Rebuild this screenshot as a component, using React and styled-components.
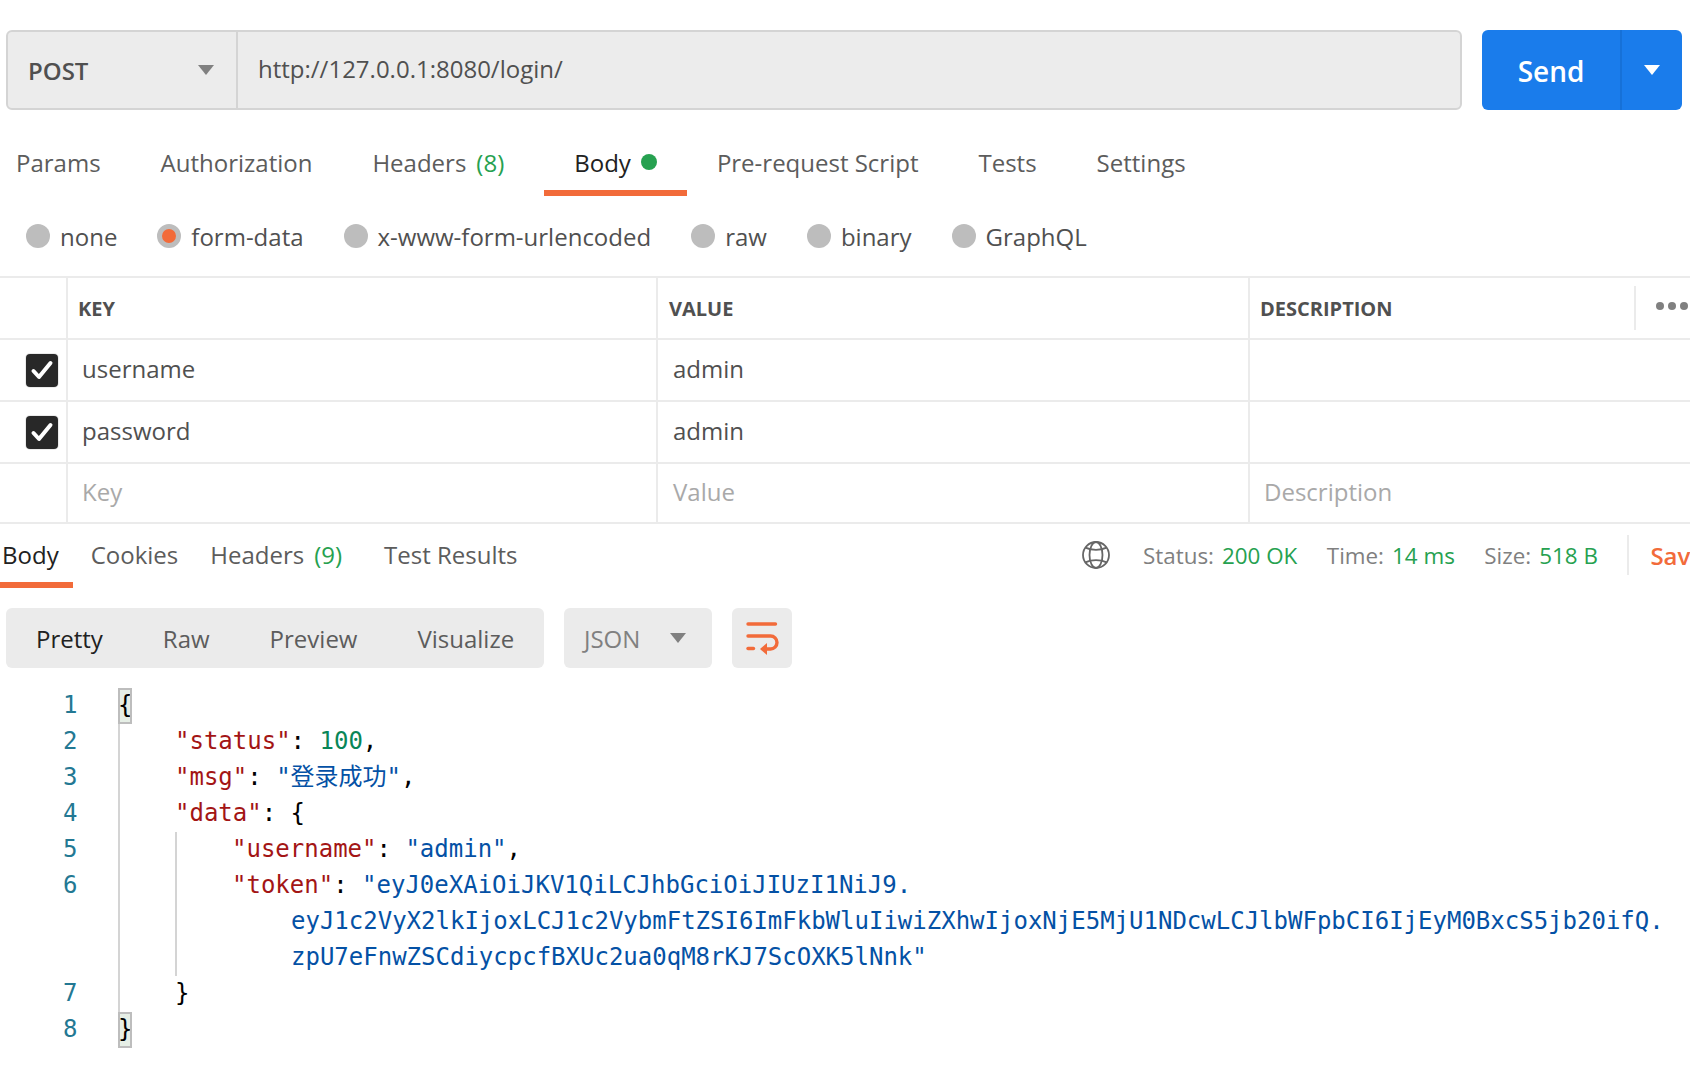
import styled, { createGlobalStyle } from 'styled-components'

const GlobalStyle = createGlobalStyle`
	html, body {
		margin: 0;
		padding: 0;
		background: #fff;
		overflow: hidden;
	}
	body {
		font-family: 'Open Sans', 'Noto Sans', sans-serif;
		color: #505050;
	}
`

const tokenLines = [
	'eyJ1c2VyX2lkIjoxLCJ1c2VybmFtZSI6ImFkbWluIiwiZXhwIjoxNjE5MjU1NDcwLCJlbWFpbCI6IjEyM0BxcS5jb20ifQ.',
	'zpU7eFnwZSCdiycpcfBXUc2ua0qM8rKJ7ScOXK5lNnk"',
]

const requestTabs = [
	{ label: 'Params' },
	{ label: 'Authorization' },
	{ label: 'Headers', count: '(8)' },
	{ label: 'Body', active: true, dot: true },
	{ label: 'Pre-request Script' },
	{ label: 'Tests' },
	{ label: 'Settings' },
]

const bodyTypes = ['none', 'form-data', 'x-www-form-urlencoded', 'raw', 'binary', 'GraphQL']

function Caret({ color = '#808080' }) {
	return (
		<svg width="16" height="12" viewBox="0 0 16 12">
			<path d="M0 1h16L8 11z" fill={color} />
		</svg>
	)
}

function Check() {
	return (
		<svg width="24" height="22" viewBox="0 0 24 22" fill="none">
			<path d="M3.500 12l5.500 6L20.500 4" stroke="#fff" strokeWidth="4" strokeLinecap="round" strokeLinejoin="round" />
		</svg>
	)
}

function Globe() {
	return (
		<svg width="28" height="28" viewBox="0 0 28 28" fill="none" stroke="#666" strokeWidth="1.8">
			<circle cx="14" cy="14" r="13" />
			<ellipse cx="14" cy="14" rx="6.500" ry="13" />
			<path d="M3.400 6.600c6 3 15.200 3 21.200 0M3.400 21.400c6-3 15.200-3 21.200 0" />
		</svg>
	)
}

function WrapIcon() {
	return (
		<svg width="34" height="36" viewBox="0 0 34 36" fill="none" stroke="#f26b3a" strokeWidth="3.4" strokeLinecap="round">
			<path d="M3 4H30.500" />
			<path d="M3 16H25.500a6.500 6.500 0 0 1 0 13H21" />
			<path d="M3 28.500H8.500" />
			<path d="M22 23v12l-7-6z" fill="#f26b3a" stroke="none" />
		</svg>
	)
}

function MoreDots() {
	return (
		<svg width="32" height="8" viewBox="0 0 32 8" fill="#808080">
			<circle cx="4" cy="4" r="4" />
			<circle cx="16" cy="4" r="4" />
			<circle cx="28" cy="4" r="4" />
		</svg>
	)
}

export default function App() {
	return (
		<Page>
			<GlobalStyle />
			<UrlRow>
				<UrlBar>
					<MethodSelect>
						<span>POST</span>
						<Caret />
					</MethodSelect>
					<UrlInput>http://127.0.0.1:8080/login/</UrlInput>
				</UrlBar>
				<SendGroup>
					<SendButton>Send</SendButton>
					<SendCaret>
						<Caret color="#fff" />
					</SendCaret>
				</SendGroup>
			</UrlRow>

			<RequestTabs>
				{requestTabs.map((tab) => (
					<RequestTab key={tab.label} $active={tab.active}>
						{tab.label}
						{tab.count && <Count>{tab.count}</Count>}
						{tab.dot && <GreenDot />}
					</RequestTab>
				))}
			</RequestTabs>

			<BodyTypes>
				{bodyTypes.map((type) => (
					<BodyType key={type}>
						<Radio $checked={type === 'form-data'} />
						{type}
					</BodyType>
				))}
			</BodyTypes>

			<Table>
				<Row>
					<CheckCell />
					<HeadCell>KEY</HeadCell>
					<HeadCell>VALUE</HeadCell>
					<HeadCell>
						DESCRIPTION
						<TableMenu>
							<MoreDots />
						</TableMenu>
					</HeadCell>
				</Row>
				{[
					['username', 'admin'],
					['password', 'admin'],
				].map(([key, value]) => (
					<Row key={key}>
						<CheckCell>
							<CheckBox>
								<Check />
							</CheckBox>
						</CheckCell>
						<Cell>{key}</Cell>
						<Cell>{value}</Cell>
						<Cell />
					</Row>
				))}
				<Row $last>
					<CheckCell />
					<Cell $muted>Key</Cell>
					<Cell $muted>Value</Cell>
					<Cell $muted>Description</Cell>
				</Row>
			</Table>

			<ResponseBar>
				<ResponseTabs>
					<ResponseTab $active>Body</ResponseTab>
					<ResponseTab>Cookies</ResponseTab>
					<ResponseTab>
						Headers<Count>(9)</Count>
					</ResponseTab>
					<ResponseTab>Test Results</ResponseTab>
				</ResponseTabs>
				<ResponseMeta>
					<GlobeSlot>
						<Globe />
					</GlobeSlot>
					<Meta>
						Status:<MetaValue>200 OK</MetaValue>
					</Meta>
					<Meta>
						Time:<MetaValue>14 ms</MetaValue>
					</Meta>
					<Meta>
						Size:<MetaValue>518 B</MetaValue>
					</Meta>
					<SaveLink>Save Response</SaveLink>
				</ResponseMeta>
			</ResponseBar>

			<ViewBar>
				<ViewModes>
					<ViewMode $active>Pretty</ViewMode>
					<ViewMode>Raw</ViewMode>
					<ViewMode>Preview</ViewMode>
					<ViewMode>Visualize</ViewMode>
				</ViewModes>
				<FormatSelect>
					JSON
					<Caret />
				</FormatSelect>
				<WrapButton>
					<WrapIcon />
				</WrapButton>
			</ViewBar>

			<Editor>
				<Gutter>
					<LineNo>1</LineNo>
					<LineNo>2</LineNo>
					<LineNo>3</LineNo>
					<LineNo>4</LineNo>
					<LineNo>5</LineNo>
					<LineNo $span={3}>6</LineNo>
					<LineNo>7</LineNo>
					<LineNo>8</LineNo>
				</Gutter>
				<Code>
					<CodeLine>
						<Bracket>{'{'}</Bracket>
					</CodeLine>
					<Fold>
						<CodeLine>
							<Key>"status"</Key>: <Num>100</Num>,
						</CodeLine>
						<CodeLine>
							<Key>"msg"</Key>: <Str>"登录成功"</Str>,
						</CodeLine>
						<CodeLine>
							<Key>"data"</Key>: {'{'}
						</CodeLine>
						<Fold>
							<CodeLine>
								<Key>"username"</Key>: <Str>"admin"</Str>,
							</CodeLine>
							<CodeLine>
								<Key>"token"</Key>: <Str>"eyJ0eXAiOiJKV1QiLCJhbGciOiJIUzI1NiJ9.</Str>
							</CodeLine>
							{tokenLines.map((line) => (
								<WrappedLine key={line}>
									<Str>{line}</Str>
								</WrappedLine>
							))}
						</Fold>
						<CodeLine>{'}'}</CodeLine>
					</Fold>
					<CodeLine>
						<Bracket>{'}'}</Bracket>
					</CodeLine>
				</Code>
			</Editor>
		</Page>
	)
}

const Page = styled.div`
	width: 1690px;
	height: 1074px;
	overflow: hidden;
	font-size: 24px;
`
const UrlRow = styled.div`
	display: flex;
	gap: 20px;
	padding: 30px 8px 0 6px;
`
const UrlBar = styled.div`
	flex: 1;
	height: 80px;
	box-sizing: border-box;
	display: flex;
	background: #ececec;
	border: 2px solid #d4d4d4;
	border-radius: 6px;
`
const MethodSelect = styled.div`
	width: 230px;
	box-sizing: border-box;
	display: flex;
	align-items: center;
	justify-content: space-between;
	padding: 0 22px 0 20px;
	border-right: 2px solid #d4d4d4;
	font-weight: 600;
	color: #505050;
`
const UrlInput = styled.div`
	display: flex;
	align-items: center;
	padding: 0 0 4px 20px;
	color: #505050;
`
const SendGroup = styled.div`
	display: flex;
	height: 80px;
	width: 200px;
	border-radius: 6px;
	overflow: hidden;
	background: #1a7ceb;
	color: #fff;
`
const SendButton = styled.div`
	width: 138px;
	box-sizing: content-box;
	display: flex;
	align-items: center;
	justify-content: center;
	padding-top: 2px;
	font-size: 28px;
	font-weight: 600;
	border-right: 2px solid #1671d8;
`
const SendCaret = styled.div`
	flex: 1;
	display: flex;
	align-items: center;
	justify-content: center;
`
const RequestTabs = styled.div`
	display: flex;
	height: 86px;
	padding-left: 16px;
	gap: 60px;
`
const RequestTab = styled.div`
	position: relative;
	display: flex;
	align-items: center;
	box-sizing: border-box;
	height: 86px;
	padding-top: 18px;
	color: ${(p) => (p.$active ? '#212121' : '#5c5c5c')};
	${(p) =>
		p.$active &&
		`
		margin-left: 10px;
		&::after {
			content: '';
			position: absolute;
			left: -30px;
			right: -30px;
			bottom: 0;
			height: 6px;
			background: #f26b3a;
		}
	`}
`
const Count = styled.span`
	margin-left: 10px;
	color: #26a150;
`
const GreenDot = styled.i`
	width: 16px;
	height: 16px;
	margin-left: 10px;
	border-radius: 50%;
	background: #26a150;
`
const BodyTypes = styled.div`
	display: flex;
	align-items: center;
	height: 80px;
	padding-left: 26px;
	gap: 40px;
`
const BodyType = styled.div`
	display: flex;
	align-items: center;
	gap: 10px;
	color: #505050;
`
const Radio = styled.span`
	width: 24px;
	height: 24px;
	box-sizing: border-box;
	border-radius: 50%;
	background: ${(p) => (p.$checked ? '#f26b3a' : '#bdbdbd')};
	border: ${(p) => (p.$checked ? '5px solid #bdbdbd' : '0')};
`
const Table = styled.div`
	border-top: 2px solid #ebebeb;
	border-bottom: 2px solid #ebebeb;
`
const Row = styled.div`
	display: grid;
	grid-template-columns: 66px 590px 592px 1fr;
	height: ${(p) => (p.$last ? '58px' : '60px')};
	border-bottom: ${(p) => (p.$last ? '0' : '2px solid #ebebeb')};
`
const CheckCell = styled.div`
	display: flex;
	align-items: center;
	justify-content: flex-end;
	padding-right: 8px;
`
const CheckBox = styled.div`
	width: 32px;
	height: 33px;
	box-sizing: border-box;
	display: flex;
	align-items: center;
	justify-content: center;
	background: #282828;
	border-radius: 4px;
	box-shadow: 0 0 0 1px #ebebeb;
`
const Cell = styled.div`
	display: flex;
	align-items: center;
	padding: 0 0 3px 14px;
	border-left: 2px solid #ebebeb;
	color: ${(p) => (p.$muted ? '#a9a9a9' : '#505050')};
	&:nth-child(3) {
		padding-left: 15px;
	}
`
const HeadCell = styled.div`
	position: relative;
	display: flex;
	align-items: center;
	padding-left: 10px;
	border-left: 2px solid #ebebeb;
	font-size: 20px;
	font-weight: 700;
	color: #505050;
	&:nth-child(3) {
		padding-left: 11px;
	}
`
const TableMenu = styled.div`
	position: absolute;
	top: 8px;
	bottom: 8px;
	left: 384px;
	display: flex;
	align-items: flex-start;
	padding: 16px 0 0 20px;
	box-sizing: border-box;
	border-left: 2px solid #ebebeb;
`
const ResponseBar = styled.div`
	display: flex;
	justify-content: space-between;
	align-items: stretch;
	height: 64px;
`
const ResponseTabs = styled.div`
	display: flex;
	padding-left: 2px;
	gap: 32px;
`
const ResponseTab = styled.div`
	position: relative;
	display: flex;
	align-items: center;
	box-sizing: border-box;
	height: 64px;
	padding-bottom: 4px;
	color: ${(p) => (p.$active ? '#212121' : '#5c5c5c')};
	&:nth-child(4) {
		margin-left: 10px;
	}
	${(p) =>
		p.$active &&
		`
		&::after {
			content: '';
			position: absolute;
			left: -2px;
			right: -14px;
			bottom: 0;
			height: 6px;
			background: #f26b3a;
		}
	`}
`
const ResponseMeta = styled.div`
	display: flex;
	align-items: center;
	width: 608px;
	flex: none;
	overflow: hidden;
	font-size: 22.4px;
	white-space: nowrap;
	padding-bottom: 2px;
`
const GlobeSlot = styled.div`
	display: flex;
	margin-right: 33px;
`
const Meta = styled.div`
	display: flex;
	margin-right: 29.5px;
	color: #808080;
`
const MetaValue = styled.span`
	margin-left: 8px;
	color: #26a150;
`
const SaveLink = styled.div`
	flex: none;
	height: 40px;
	display: flex;
	align-items: center;
	padding-left: 21px;
	border-left: 2px solid #ebebeb;
	font-size: 24px;
	font-weight: 600;
	color: #f26b3a;
`
const ViewBar = styled.div`
	display: flex;
	gap: 20px;
	padding: 20px 0 0 6px;
`
const ViewModes = styled.div`
	display: flex;
	align-items: center;
	width: 538px;
	height: 60px;
	box-sizing: border-box;
	padding-left: 30px;
	gap: 60px;
	background: #ebebeb;
	border-radius: 6px;
`
const ViewMode = styled.div`
	color: ${(p) => (p.$active ? '#212121' : '#5c5c5c')};
`
const FormatSelect = styled.div`
	display: flex;
	align-items: center;
	justify-content: space-between;
	width: 148px;
	height: 60px;
	box-sizing: border-box;
	padding: 0 26px 0 20px;
	background: #ebebeb;
	border-radius: 6px;
	color: #808080;
`
const WrapButton = styled.div`
	display: flex;
	align-items: center;
	justify-content: center;
	width: 60px;
	height: 60px;
	background: #ebebeb;
	border-radius: 6px;
`
const Editor = styled.div`
	display: flex;
	padding-top: 20px;
	font-family: 'DejaVu Sans Mono', 'Noto Sans CJK SC', monospace;
	font-size: 24px;
	line-height: 34px;
	color: #000;
`
const Gutter = styled.div`
	width: 118px;
	flex: none;
	box-sizing: border-box;
	padding-left: 63px;
	color: #237893;
`
const LineNo = styled.div`
	height: ${(p) => (p.$span || 1) * 36}px;
`
const Code = styled.div`
	flex: 1;
	min-width: 0;
`
const CodeLine = styled.div`
	height: 36px;
	white-space: pre;
`
const WrappedLine = styled(CodeLine)`
	padding-left: 59px;
`
const Fold = styled.div`
	padding-left: 55px;
	border-left: 2px solid #d4d4d4;
`
const Bracket = styled.span`
	display: inline-block;
	width: 14px;
	height: 36px;
	box-sizing: border-box;
	background: #e6efe6;
	outline: 2px solid #bdbdbd;
	outline-offset: -2px;
`
const Key = styled.span`
	color: #a31515;
`
const Num = styled.span`
	color: #098658;
`
const Str = styled.span`
	color: #0451a5;
`
